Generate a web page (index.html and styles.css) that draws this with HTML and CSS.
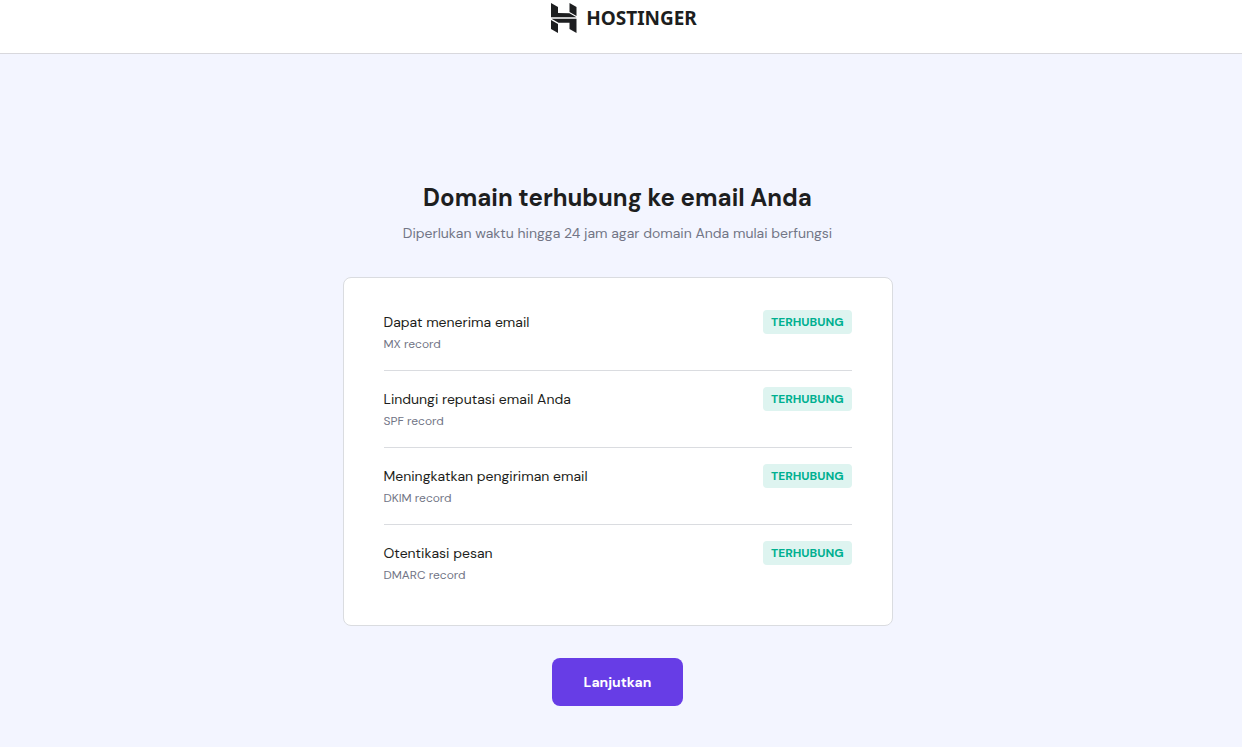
FILE: index.html
```
<!DOCTYPE html>
<html lang="id">
<head>
  <meta charset="utf-8">
  <meta name="viewport" content="width=device-width, initial-scale=1">
  <title>Hostinger</title>
  <link rel="stylesheet" href="styles.css">
</head>
<body>
  <header class="header">
    <a class="logo" href="#">
      <svg class="logo-mark" viewBox="0 0 26 30" aria-hidden="true">
        <path d="M0 0L7 4V10L18.500 10.300L25.500 14.300H0Z"/>
        <path d="M18.500 0L25.500 4V13L18.500 9Z"/>
        <path d="M0.500 15.800H25.500V30L18.500 26V19.800H7.500Z"/>
        <path d="M0 17L7 21V30L0 26Z"/>
      </svg>
      <span>HOSTINGER</span>
    </a>
  </header>

  <main class="content">
    <h1 class="title">Domain terhubung ke email Anda</h1>
    <p class="subtitle">Diperlukan waktu hingga 24 jam agar domain Anda mulai berfungsi</p>

    <ul class="card">
      <li class="record">
        <div>
          <p class="record-name">Dapat menerima email</p>
          <p class="record-type">MX record</p>
        </div>
        <span class="badge">TERHUBUNG</span>
      </li>
      <li class="record">
        <div>
          <p class="record-name">Lindungi reputasi email Anda</p>
          <p class="record-type">SPF record</p>
        </div>
        <span class="badge">TERHUBUNG</span>
      </li>
      <li class="record">
        <div>
          <p class="record-name">Meningkatkan pengiriman email</p>
          <p class="record-type">DKIM record</p>
        </div>
        <span class="badge">TERHUBUNG</span>
      </li>
      <li class="record">
        <div>
          <p class="record-name">Otentikasi pesan</p>
          <p class="record-type">DMARC record</p>
        </div>
        <span class="badge">TERHUBUNG</span>
      </li>
    </ul>

    <button class="button" type="button">Lanjutkan</button>
  </main>
</body>
</html>
```

FILE: styles.css
```
* {
  box-sizing: border-box;
}

body {
  margin: 0;
  background-color: #f3f5ff;
  color: #1d1e20;
  font-family: "DM Sans", Inter, sans-serif;
  font-size: 14px;
  line-height: 24px;
}

h1, p, ul {
  margin: 0;
  padding: 0;
}

.header {
  display: flex;
  justify-content: center;
  padding: 3px 0 20px 6px;
  border-bottom: 1px solid #d8d8dd;
  background-color: #fff;
}

.logo {
  display: flex;
  align-items: center;
  gap: 9px;
  color: #1d1e20;
  font-family: "Noto Sans", sans-serif;
  font-size: 19px;
  font-weight: 700;
  text-decoration: none;
}

.logo-mark {
  width: 26px;
  height: 30px;
  fill: #1d1e20;
}

.content {
  display: flex;
  flex-direction: column;
  align-items: center;
  padding: 128px 7px 40px 0;
}

.title {
  font-size: 24px;
  font-weight: 700;
  line-height: 32px;
  text-align: center;
}

.subtitle {
  margin-top: 7px;
  color: #727586;
  text-align: center;
}

.card {
  width: 100%;
  max-width: 550px;
  margin: 32px 0;
  padding: 16px 40px 24px;
  border: 1px solid #dadce0;
  border-radius: 8px;
  background-color: #fff;
  list-style: none;
}

.record {
  display: flex;
  align-items: flex-start;
  justify-content: space-between;
  padding: 16px 0;
}

.record + .record {
  border-top: 1px solid #dadce0;
}

.record-type {
  color: #727586;
  font-size: 12px;
  line-height: 20px;
}

.badge {
  padding: 0 8px;
  border-radius: 4px;
  background-color: #def4f0;
  color: #00b090;
  font-size: 12px;
  font-weight: 700;
}

.button {
  padding: 12px 32px;
  border: 0;
  border-radius: 8px;
  background-color: #673de6;
  color: #fff;
  font: inherit;
  font-weight: 700;
  cursor: pointer;
}
```
